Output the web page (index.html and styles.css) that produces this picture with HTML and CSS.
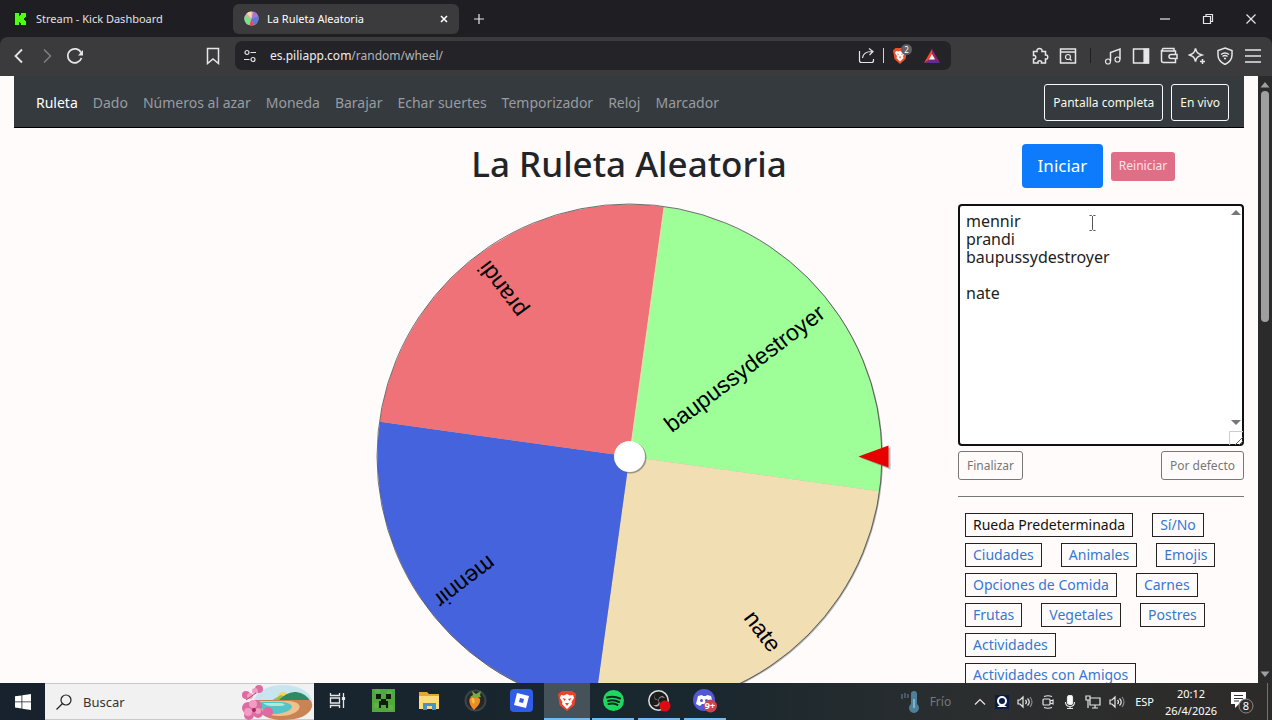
FILE: index.html
```
<!DOCTYPE html>
<html lang="es">
<head>
<meta charset="utf-8">
<title>La Ruleta Aleatoria</title>
<link rel="stylesheet" href="styles.css">
</head>
<body>
<header class="browser">
  <div class="tabs">
    <button class="tab">
      <svg width="14" height="14" viewBox="0 0 14 14"><path fill="#0a2a08" d="M0 0h14v14H0z"/><path fill="#53fc18" d="M1 1h4v3h1V3h1V1h5v4h-1v1h-1v2h1v1h1v4H7v-2H6v-1H5v3H1z"/></svg>
      <span>Stream - Kick Dashboard</span>
    </button>
    <button class="tab tab-active">
      <svg width="15" height="15" viewBox="0 0 16 16"><circle cx="8" cy="8" r="7.500" fill="#e9a3b4"/><path fill="#7be08a" d="M8 8L1 5a7.500 7.500 0 0 0 4 10z"/><path fill="#5d79e0" d="M8 8l7-3a7.500 7.500 0 0 1-5 10z"/><path fill="#a974d8" d="M8 8l2-7.500A7.500 7.500 0 0 1 15 5z"/><path fill="#efe0a8" d="M8 8L3 2.500A7.500 7.500 0 0 1 8 .500z"/><path fill="#e34848" d="M8 8l2 7a7.500 7.500 0 0 1-4 .300z"/></svg>
      <span class="tab-name">La Ruleta Aleatoria</span>
      <svg class="line" width="10" height="10" viewBox="0 0 10 10"><path stroke="#fff" stroke-width="1.600" d="M2 2l6 6M8 2L2 8"/></svg>
    </button>
    <button class="icon-btn new-tab" aria-label="Nueva pestaña"><svg class="line" width="12" height="12" viewBox="0 0 12 12"><path d="M6 1v10M1 6h10"/></svg></button>
    <div class="window-controls">
      <button class="icon-btn" aria-label="Minimizar"><svg class="line" width="12" height="12" viewBox="0 0 12 12"><path d="M1 6h10"/></svg></button>
      <button class="icon-btn" aria-label="Restaurar"><svg class="line" width="12" height="12" viewBox="0 0 12 12"><path d="M1.500 3.500h7v7h-7zM4 3.500v-2h6.500v7h-2"/></svg></button>
      <button class="icon-btn" aria-label="Cerrar"><svg class="line" width="12" height="12" viewBox="0 0 12 12"><path d="M1.500 1.500l9 9M10.500 1.500l-9 9"/></svg></button>
    </div>
  </div>
  <div class="toolbar">
    <div class="nav-buttons">
      <button class="icon-btn" aria-label="Atrás"><svg class="line" width="18" height="18" viewBox="0 0 18 18"><path stroke-width="1.800" d="M12 2.500L5.500 9l6.500 6.500"/></svg></button>
      <button class="icon-btn dim" aria-label="Adelante"><svg class="line" width="18" height="18" viewBox="0 0 18 18"><path stroke-width="1.500" d="M6 2.500L12.500 9 6 15.500"/></svg></button>
      <button class="icon-btn" aria-label="Recargar"><svg class="line" width="18" height="18" viewBox="0 0 18 18"><path stroke-width="1.700" d="M15.500 11A7 7 0 1 1 15 5.500"/><path fill="#e6e6e8" stroke="none" d="M17 3v5.500h-5z"/></svg></button>
    </div>
    <button class="icon-btn" aria-label="Marcador"><svg class="line" width="18" height="18" viewBox="0 0 18 18"><path stroke-width="1.500" d="M3.500 1.500h11v15L9 12l-5.500 4.500z"/></svg></button>
    <div class="address">
      <svg class="line" width="14" height="14" viewBox="0 0 14 14"><path d="M7.500 3.500H13M1 10.500h5.500"/><circle cx="4" cy="3.500" r="2"/><circle cx="10" cy="10.500" r="2"/></svg>
      <span class="url"><span class="host">es.piliapp.com</span><span>/random/wheel/</span></span>
      <svg class="line" width="17" height="17" viewBox="0 0 17 17"><path d="M1.500 4v9.500a2 2 0 0 0 2 2h10a2 2 0 0 0 2-2V12M4.500 11c.500-4 3-6.500 9.500-6.500M11 1.500l4 3-3.500 3.500"/></svg>
      <span class="divider"></span>
      <span class="shield">
        <svg width="16" height="18" viewBox="0 0 16 18"><path fill="#f1502a" d="M3.500 1h9L15 3.500l-1.500 8.500L8 17l-5.500-5L1 3.500z"/><path fill="#fff" d="M4 4l2.500.500L8 4l1.500.500L12 4l1 2-2 3 .500 2L8 14.500 4.500 11 5 9 3 6z"/><path fill="#f1502a" d="M5 6.500l2 .500-1 1zM11 6.500L9 7l1 1zM7 9.500h2L8 12z"/></svg>
        <span class="shield-count">2</span>
      </span>
      <svg width="16" height="14" viewBox="0 0 16 14"><path fill="#ff4724" d="M8 0L0 14l8-4.500z"/><path fill="#9e1f63" d="M8 0l8 14-8-5z"/><path fill="#662d91" d="M0 14h16L8 9z"/><path fill="#fff" d="M8 5l3 5.500H5z"/></svg>
    </div>
    <div class="tools">
      <button class="icon-btn" aria-label="Extensiones"><svg class="line" width="18" height="18" viewBox="0 0 18 18"><path stroke-width="1.500" d="M2.500 4.500H6c-1-4 6-4 5 0h3.500V8c3-1 3 5 0 4v4h-4c1-3-4.500-3-3.500 0H2.500v-4c3 1 3-4.500 0-3.500z"/></svg></button>
      <button class="icon-btn" aria-label="Buscar pestañas"><svg class="line" width="18" height="18" viewBox="0 0 18 18"><path stroke-width="1.500" d="M1.500 2h15v14h-15zM1.500 5h15"/><circle cx="9" cy="10" r="2.500"/><path d="M11 12l1.500 1.500"/></svg></button>
      <span class="divider divider-dark"></span>
      <button class="icon-btn" aria-label="Lista de reproducción"><svg class="line" width="18" height="18" viewBox="0 0 18 18"><path stroke-width="1.500" d="M6.500 14V5.500L16 2v10"/><circle cx="4" cy="14.500" r="2.500"/><circle cx="13.500" cy="12.500" r="2.500"/></svg></button>
      <button class="icon-btn" aria-label="Panel lateral"><svg class="line" width="18" height="18" viewBox="0 0 18 18"><path stroke-width="1.500" d="M1.500 2h15v14h-15z"/><path fill="#e6e6e8" d="M12 2h4.500v14H12z"/></svg></button>
      <button class="icon-btn" aria-label="Cartera"><svg class="line" width="18" height="18" viewBox="0 0 18 18"><path stroke-width="1.500" d="M15.500 7V4H3a1.500 1.500 0 0 1 0-2.500h11V4M1.500 3v10.500a2 2 0 0 0 2 2h12V12M11 7.500h6v4h-6a2 2 0 0 1 0-4z"/></svg></button>
      <button class="icon-btn" aria-label="Leo AI"><svg class="line" width="18" height="18" viewBox="0 0 18 18"><path stroke-width="1.500" d="M7.500 1.500c1 4 2 5 6.500 6.500-4.500 1.500-5.500 2.500-6.500 6.500-1-4-2-5-6-6.500 4-1.500 5-2.500 6-6.500zM14.500 12v5M12 14.500h5"/></svg></button>
      <button class="icon-btn" aria-label="VPN"><svg class="line" width="18" height="18" viewBox="0 0 18 18"><path stroke-width="1.500" d="M9 1l7 2.500V8c0 4.500-3 7.500-7 9.500C5 15.500 2 12.500 2 8V3.500zM5 7.500c2.500-2 5.500-2 8 0M6.500 9.500c1.500-1.200 3.500-1.200 5 0M8 11.500h2"/></svg></button>
      <button class="icon-btn" aria-label="Menú"><svg class="line" width="18" height="18" viewBox="0 0 18 18"><path stroke-width="1.600" d="M1 3h16M1 9h16M1 15h16"/></svg></button>
    </div>
  </div>
</header>

<div class="viewport">
  <div class="page">
    <nav class="site-nav">
      <a class="current" href="#">Ruleta</a><a href="#">Dado</a><a href="#">Números al azar</a><a href="#">Moneda</a><a href="#">Barajar</a><a href="#">Echar suertes</a><a href="#">Temporizador</a><a href="#">Reloj</a><a href="#">Marcador</a>
      <div class="nav-actions"><button class="outline-btn">Pantalla completa</button><button class="outline-btn">En vivo</button></div>
    </nav>
    <div class="columns">
      <main class="stage">
        <h1>La Ruleta Aleatoria</h1>
        <svg class="wheel" viewBox="0 0 524 512">
          <g transform="translate(262.500 256.500)">
            <circle cx="1" cy="1" r="252.500" fill="#b5b0aa"/>
            <g transform="rotate(7.900)">
              <path fill="#9eff98" d="M0 0L0-252A252 252 0 0 1 252 0z"/>
              <path fill="#f2deb3" d="M0 0L252 0A252 252 0 0 1 0 252z"/>
              <path fill="#4563dc" d="M0 0L0 252A252 252 0 0 1-252 0z"/>
              <path fill="#ee7277" d="M0 0L-252 0A252 252 0 0 1 0-252z"/>
              <path stroke="#f2deb3" d="M0 0V-252"/>
            </g>
            <circle r="252.500" fill="none" stroke="#2f3a3a" stroke-width=".700"/>
            <g class="slice-names">
              <text transform="rotate(-37.100)" x="242" y="7">baupussydestroyer</text>
              <text transform="rotate(52.900)" x="242" y="7">nate</text>
              <text transform="rotate(142.900)" x="242" y="7">mennir</text>
              <text transform="rotate(232.900)" x="242" y="7">prandi</text>
            </g>
            <circle cx="1" cy="1" r="16" fill="#666" opacity=".6"/>
            <circle r="15.500" fill="#fff"/>
            <path fill="#777" opacity=".5" d="M230 1l31-10v22z"/>
            <path fill="#e60000" d="M229 0l30-11v22z"/>
          </g>
        </svg>
      </main>
      <aside class="panel">
        <div class="main-actions"><button class="start">Iniciar</button><button class="reset">Reiniciar</button></div>
        <div class="names">
          <textarea aria-label="Opciones">mennir
prandi
baupussydestroyer

nate</textarea>
          <svg class="arrow arrow-up" viewBox="0 0 10 5"><path d="M5 0l5 5H0z"/></svg>
          <svg class="arrow arrow-down" viewBox="0 0 10 5"><path d="M5 5L0 0h10z"/></svg>
          <svg class="grip" viewBox="0 0 14 14"><path fill="#fff" stroke="#ccc" d="M.500 14V.500H14"/><path stroke="#666" d="M6 14l8-8M10 14l4-4"/></svg>
          <svg class="caret" viewBox="0 0 7 16"><path fill="none" stroke="#555" d="M.500.500h2l1 1 1-1h2M3.500 1.500v13M.500 15.500h2l1-1 1 1h2"/></svg>
        </div>
        <div class="list-actions"><button>Finalizar</button><button>Por defecto</button></div>
        <hr>
        <div class="presets">
          <a class="current" href="#">Rueda Predeterminada</a><a href="#">Sí/No</a><a href="#">Ciudades</a><a href="#">Animales</a><a href="#">Emojis</a><a href="#">Opciones de Comida</a><a href="#">Carnes</a><a href="#">Frutas</a><a href="#">Vegetales</a><a href="#">Postres</a><a href="#">Actividades</a><a href="#">Actividades con Amigos</a>
        </div>
      </aside>
    </div>
  </div>
  <div class="scrollbar">
    <svg width="10" height="6" viewBox="0 0 10 6"><path d="M5 0l4.500 5.500h-9z"/></svg>
    <div class="track"><div class="thumb"></div></div>
    <svg width="10" height="6" viewBox="0 0 10 6"><path d="M5 6L.500.500h9z"/></svg>
  </div>
</div>

<footer class="taskbar">
  <button class="start-menu" aria-label="Inicio"><svg width="16" height="16" viewBox="0 0 16 16"><path fill="#fff" d="M0 2.300l6.500-.900v6.100H0zM7.300 1.300L16 0v7.500H7.300zM0 8.300h6.500v6.200L0 13.600zM7.300 8.300H16V16l-8.700-1.300z"/></svg></button>
  <button class="search">
    <svg class="line" width="16" height="16" viewBox="0 0 16 16"><circle cx="10" cy="6" r="5" stroke="#222"/><path stroke="#222" d="M6.500 9.500l-6 6"/></svg>
    <span>Buscar</span>
    <svg class="beach" width="72" height="36" viewBox="0 0 72 36">
      <ellipse cx="42" cy="18" rx="29" ry="17" fill="#c8e4ee"/>
      <circle cx="42" cy="13" r="5" fill="#f6d35b"/>
      <path fill="#8fbf55" d="M28 18l12-7 8 3 7-6 14 10z"/><path fill="#2c8b62" d="M36 18q10-11 19-10 10 1 15 10z"/>
      <path fill="#c98455" d="M15 16h54q3 3 2 7c-3 9-14 13-30 13-15 0-29-8-26-20z"/>
      <path fill="#f0c28b" d="M18 17h29c20 1 12 15-8 15-15 0-22-6-21-15z"/>
      <path fill="#54c4c6" d="M19 18h21c18 1 12 11-6 12-10 0-16-5-15-12z"/>
      <path fill="#b0e8df" d="M22 19h18c5 1 5 2 0 3-8 0-14 1-18-3z"/>
      <g fill="#dc6ba3"><circle cx="7" cy="24" r="6"/><circle cx="15" cy="22" r="6"/><circle cx="17" cy="29" r="5"/><circle cx="8" cy="31" r="5"/><circle cx="27" cy="28" r="5"/><circle cx="5" cy="11" r="4"/><circle cx="18" cy="5" r="4"/></g>
      <g fill="#f29cc2"><circle cx="12" cy="20" r="4"/><circle cx="7" cy="28" r="4"/><circle cx="17" cy="27" r="3"/><circle cx="9" cy="12" r="3"/><circle cx="14" cy="7" r="3"/></g>
      <circle cx="13" cy="26" r="2" fill="#a92861"/><path stroke="#9b5364" fill="none" d="M5 16l10-7"/>
    </svg>
  </button>
  <div class="apps">
    <button class="app" aria-label="Vista de tareas"><svg class="line" width="17" height="17" viewBox="0 0 17 17"><path d="M1.500 1v2.500h9V1M1.500 16v-2.500h9V16M1.500 6h9v5h-9zM14.500 1v15" stroke-width="1.300"/><path fill="#fff" d="M13.500 5.500h2v2h-2z"/></svg></button>
    <button class="app" aria-label="Minecraft"><svg width="23" height="23" viewBox="0 0 23 23"><path fill="#53a83d" d="M0 0h23v23H0z"/><path fill="#60b246" d="M3 0h5v4H3zM15 2h5v4h-5zM2 14h4v5H2zM17 16h4v5h-4z"/><path fill="#101b0e" d="M4 5h5v5H4zM14 5h5v5h-5zM9 10h5v2h2v7h-2v-3H9v3H7v-7h2z"/></svg></button>
    <button class="app" aria-label="Explorador de archivos"><svg width="21" height="18" viewBox="0 0 21 18"><path fill="#dfa935" d="M0 0h8l2 2h10v14H0z"/><path fill="#ffdc78" d="M0 4h20v13H0z"/><path fill="#4394c8" d="M4 18v-7h13v7h-4v-4H8v4z"/></svg></button>
    <button class="app" aria-label="FL Studio"><svg width="23" height="23" viewBox="0 0 23 23"><circle cx="11.500" cy="11.500" r="11" fill="#3d4346"/><circle cx="11.500" cy="11.500" r="9" fill="#23292b"/><path fill="#f28a22" d="M6 9c3-3 8-2 10 1 1 4-3 8-6 11-3-3-6-8-4-12z"/><path fill="#ffc24d" d="M8 9c3 0 3 3 2 6-2-1-3-4-2-6z"/><path fill="#79ad3b" d="M6 8l3-2-1-4 4 3 5-3-1 4 1 2-5 1z"/></svg></button>
    <button class="app" aria-label="Roblox"><svg width="23" height="23" viewBox="0 0 23 23"><rect width="23" height="23" rx="4" fill="#315ce8"/><path fill="#fff" fill-rule="evenodd" d="M7 4l12 3-3 12-12-3zM10 9l-1 4 4 1 1-4z"/></svg></button>
    <button class="app app-active" aria-label="Brave"><svg width="20" height="22" viewBox="0 0 20 22"><path fill="#ed4428" d="M5 1h10l4 3-1.500 11L10 21l-7.500-6L1 4z"/><path fill="#fff" d="M4 5l3 .500L10 4l3 1.500L16 5l1 3-2.500 4 .500 2-5 5-5-5 .500-2L3 8z"/><path fill="#ed4428" d="M5.500 8l3.500 1-1.500 2zM14.500 8L11 9l1.500 2zM8 13h4l-2 3z"/></svg></button>
    <button class="app app-open" aria-label="Spotify"><svg width="21" height="21" viewBox="0 0 21 21"><circle cx="10.500" cy="10.500" r="10.500" fill="#1ed760"/><path fill="none" stroke="#12251b" stroke-width="2" stroke-linecap="round" d="M4 7.500c5-1.500 9-1 13 1M5 11c4-1.200 7.500-.800 11 1M5.500 14c3-.800 6-.600 9 .900"/></svg></button>
    <button class="app app-open" aria-label="OBS Studio"><svg width="23" height="22" viewBox="0 0 23 22"><circle cx="10.500" cy="10.500" r="9.700" fill="#1b1b1c" stroke="#ddd" stroke-width="1.500"/><g fill="#b8b8b8"><path d="M8 3c-3 4-1 7 3 7-3 1-7-2-3-7z"/><path d="M17 8c-4-2-7 0-6 4-2-4 3-8 6-4zM5 15c5 1 7-2 5-5 4 4 0 9-5 5z"/></g><circle cx="17" cy="16" r="5.500" fill="#e00b12"/></svg></button>
    <button class="app app-open" aria-label="Discord"><svg width="24" height="24" viewBox="0 0 24 24"><circle cx="11" cy="11" r="11" fill="#5059d8"/><path fill="#fff" d="M5 7l4-1 1 1h3l1-1 4 1 2 8-4 2-2-2H9l-2 2-4-2z"/><g fill="#5059d8"><circle cx="8.500" cy="11.500" r="1.500"/><circle cx="13.500" cy="11.500" r="1.500"/></g><circle cx="17.500" cy="17" r="6.500" fill="#c94450"/><text class="badge-text" x="17" y="20">9+</text></svg></button>
  </div>
  <div class="tray">
    <span class="weather"><svg width="20" height="22" viewBox="0 0 20 22"><path stroke="#53687a" stroke-width="1.500" d="M1 3v5M4 2v5M7 3v4"/><path fill="#4f7f99" d="M10 3a3 3 0 0 1 6 0v10a5 5 0 1 1-6 0z"/><path stroke="#8ec7dd" stroke-width="1.500" d="M13 8v9"/></svg>Frío</span>
    <svg class="line" width="14" height="14" viewBox="0 0 14 14"><path d="M2 9.500l5-5 5 5"/></svg>
    <svg width="14" height="14" viewBox="0 0 14 14"><path fill="#0b1d46" d="M0 0h14v14H0z"/><circle cx="7" cy="6" r="4" fill="none" stroke="#fff" stroke-width="2"/><path fill="#fff" d="M2 12l3-2h4l3 2z"/></svg>
    <svg class="line" width="16" height="14" viewBox="0 0 16 14"><path d="M1 5h2l3-3v10L3 9H1zM8.500 5q2 2 0 4M10.500 3.500q3.500 3.500 0 7"/><path opacity=".5" d="M13 2q4 5 0 10"/></svg>
    <svg class="line" width="14" height="14" viewBox="0 0 14 14"><rect x="2" y="4" width="7" height="6" rx="1"/><path d="M9 6l3-1v4L9 8M3 1.500q4-1.500 8 0M3 12.500q4 1.500 8 0"/></svg>
    <svg class="line" width="14" height="14" viewBox="0 0 14 14"><rect x="4.500" y=".500" width="5" height="9" rx="2" fill="#fff"/><path d="M2.500 7c0 6 9 6 9 0M7 11v3M4 13.500h6"/></svg>
    <svg class="line" width="16" height="14" viewBox="0 0 16 14"><path d="M5 3h10v7H5zM10 10v3M7 13h6M1 1h4v4H1zM3 5v8"/></svg>
    <svg class="line" width="16" height="14" viewBox="0 0 16 14"><path d="M1 5h2l3-3v10L3 9H1zM8.500 5q2 2 0 4M10.500 3.500q3.500 3.500 0 7"/><path opacity=".5" d="M13 2q4 5 0 10"/></svg>
    <span class="lang">ESP</span>
    <span class="clock"><span>20:12</span><span>26/4/2026</span></span>
    <svg class="notes" width="24" height="24" viewBox="0 0 24 24"><path fill="#fff" d="M1 2h15v12H9l-4 4v-4H1z"/><path stroke="#333" d="M4 5.500h9M4 8.500h9M4 11h5"/><circle cx="16" cy="16" r="7" fill="#2d2d2d" stroke="#888"/><text class="note-count" x="16" y="20">8</text></svg>
  </div>
  <div class="show-desktop"></div>
</footer>
</body>
</html>
```
FILE: styles.css
```
* { box-sizing: border-box; }
body {
  margin: 0;
  height: 100vh;
  display: flex;
  flex-direction: column;
  overflow: hidden;
  font: 14px/20px "Noto Sans", "Segoe UI", sans-serif;
  background: #fffbfa;
  color: #212529;
}
button { font: inherit; color: inherit; border: 0; padding: 0; background: none; }
a { text-decoration: none; }
svg { display: block; flex: none; }
.line { fill: none; stroke: #e6e6e8; stroke-width: 1.2; }

.browser { flex: none; background: #1f1e23; color: #e2e2e4; }
.tabs { height: 37px; display: flex; align-items: center; padding-right: 15px; font-size: 11px; }
.tab { width: 226px; height: 30px; display: flex; align-items: center; gap: 8px; padding: 0 10px 0 14px; border-radius: 6px; text-align: left; }
.tab:first-child { width: 233px; }
.tab-active { padding-left: 11px; background: #3b3b3e; color: #fff; }
.tab-name { flex: 1; }
.icon-btn { display: flex; align-items: center; justify-content: center; }
.new-tab { margin-left: 14px; }
.window-controls { margin-left: auto; display: flex; gap: 31px; }
.toolbar { height: 39px; display: flex; align-items: center; gap: 13px; padding: 0 10px 2px; background: #3b3b3e; border-radius: 8px 8px 0 0; }
.nav-buttons { width: 181px; display: flex; gap: 10px; }
.dim { opacity: .4; }
.address { width: 716px; height: 29px; display: flex; align-items: center; gap: 8px; padding: 0 11px 0 8px; background: #242328; border-radius: 7px; }
.url { flex: 1; padding-left: 5px; font-size: 12px; color: #b5b5b8; }
.host { color: #efeff1; }
.divider { width: 1px; height: 15px; background: #d0d0d2; }
.divider-dark { margin: 0 3px; background: #1f1e23; }
.shield { position: relative; margin-right: 8px; }
.shield-count { position: absolute; left: 9px; top: -3px; width: 11px; height: 11px; border-radius: 6px; background: #5d6166; color: #fff; font-size: 8px; line-height: 11px; text-align: center; }
.tools { flex: 1; display: flex; align-items: center; justify-content: flex-end; gap: 10px; }

.viewport { flex: 1; min-height: 0; display: flex; }
.page { flex: 1; min-width: 0; padding: 0 14px; overflow: hidden; }
.site-nav { height: 52px; display: flex; align-items: center; gap: 15px; padding: 2px 15px 0 22px; background: #353a3f; border-bottom: 1px solid #000; }
.site-nav a { color: #999c9f; white-space: nowrap; }
.site-nav a.current { color: #fff; }
.nav-actions { margin-left: auto; display: flex; gap: 8px; }
.outline-btn { height: 37px; padding: 0 8px; border: 1px solid #f8f9fa; border-radius: 3px; color: #f8f9e8; font-size: 12px; white-space: nowrap; }
.columns { display: grid; grid-template-columns: minmax(0, 1fr) 286px; }
.stage { padding-left: 286px; display: flex; flex-direction: column; align-items: center; }
h1 { margin: 14px 0; font-size: 35px; line-height: 44px; font-weight: 500; white-space: nowrap; }
.wheel { width: 524px; height: 512px; }
.slice-names { font: 23px "Liberation Sans", Arial, sans-serif; text-anchor: end; fill: #000; }
.main-actions { height: 76px; display: flex; align-items: center; justify-content: center; gap: 8px; padding-right: 5px; }
.start { width: 81px; height: 44px; border-radius: 4px; background: #0d7bfb; color: #fff; font-size: 17px; }
.reset { width: 64px; height: 29px; border-radius: 3px; background: #e06e87; color: #fbe3e8; font-size: 12px; }
.names { position: relative; }
textarea { display: block; width: 100%; height: 242px; padding: 6px; border: 2px solid #101010; border-radius: 4px; background: #fff; color: #222; font: 16px/18px "Noto Sans", "Segoe UI", sans-serif; resize: none; overflow: hidden; outline: 0; }
.arrow { position: absolute; right: 3px; width: 10px; height: 5px; fill: #777; }
.arrow-up { top: 6px; }
.arrow-down { bottom: 21px; }
.grip { position: absolute; right: 1px; bottom: 1px; width: 14px; height: 14px; }
.caret { position: absolute; left: 131px; top: 11px; width: 7px; height: 16px; }
.list-actions { display: flex; justify-content: space-between; padding-top: 5px; }
.list-actions button { height: 29px; padding: 0 8px; border: 1px solid #777; border-radius: 3px; color: #777; font-size: 12px; }
hr { margin: 16px 0; border: 0; border-top: 1px solid #777; }
.presets { display: flex; flex-wrap: wrap; gap: 6px 19px; padding-left: 7px; }
.presets a { height: 24px; padding: 0 7px; border: 1px solid #222; color: #3678d0; line-height: 22px; white-space: nowrap; }
.presets a.current { color: #111; }
.scrollbar { width: 14px; display: flex; flex-direction: column; align-items: center; gap: 3px; padding: 6px 0; background: #2b2b2b; fill: #a0a0a0; }
.track { flex: 1; }
.thumb { width: 8px; height: 40%; border-radius: 4px; background: #9f9f9f; }

.taskbar { flex: none; height: 37px; display: flex; background: linear-gradient(90deg, #17222e, #19272e 55%, #2b2e2f 76%, #2d2b29); color: #fff; }
.start-menu { width: 45px; display: flex; align-items: center; justify-content: center; }
.search { width: 269px; display: flex; align-items: center; gap: 11px; padding: 0 1px 0 11px; border: solid #c9c9c9; border-width: 1px 0; background: #f1f1f1; color: #333; font-size: 13px; }
.beach { margin-left: auto; }
.apps { display: flex; }
.app { width: 46px; display: flex; align-items: center; justify-content: center; border-bottom: 2px solid transparent; }
.app-active { background: #46525a; border-color: #76b9ed; }
.app-open { border-image: linear-gradient(90deg, transparent 8%, #76b9ed 8%, #76b9ed 92%, transparent 92%) 2; border-width: 0 0 2px; border-style: solid; }
.badge-text { font: 700 9px "Noto Sans", sans-serif; text-anchor: middle; fill: #fff; }
.tray { margin-left: auto; display: flex; align-items: center; gap: 8px; padding-right: 13px; font-size: 12px; }
.weather { display: flex; align-items: center; gap: 9px; margin-right: 14px; color: #74787a; }
.lang { padding: 0 2px; font-size: 11px; }
.clock { width: 54px; display: flex; flex-direction: column; text-align: center; font-size: 11px; line-height: 17px; }
.notes { margin-left: 4px; }
.note-count { font: 11px "Noto Sans", sans-serif; text-anchor: middle; fill: #fff; }
.show-desktop { width: 5px; border-left: 1px solid #77716c; }
```
